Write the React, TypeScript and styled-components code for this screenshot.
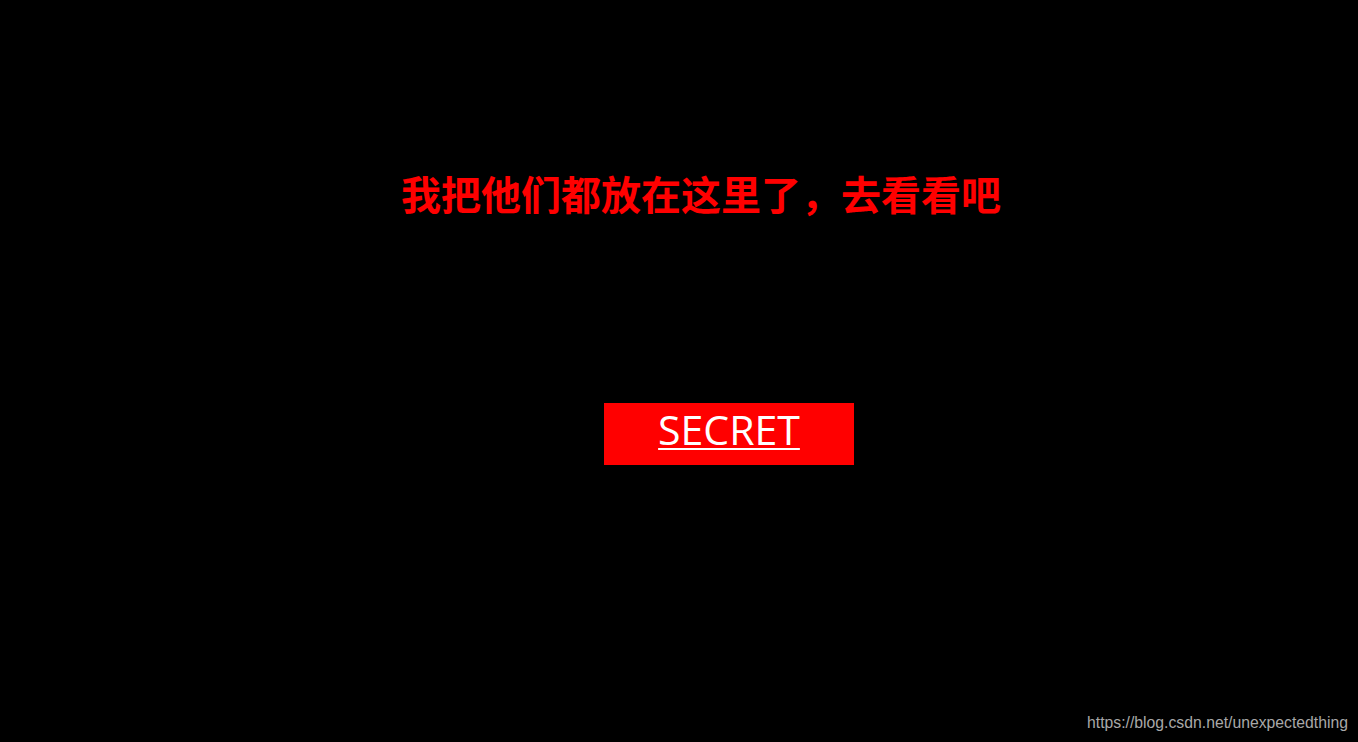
import React from "react";
import styled, { createGlobalStyle } from "styled-components";

const Global = createGlobalStyle`
  html, body { margin: 0; padding: 0; background: #000; }
  #root { height: 742px; }
`;

const Page = styled.div`
  height: 742px;
  background: #000;
  display: flex;
  flex-direction: column;
  align-items: flex-start;
  box-sizing: border-box;
  padding-top: 166px;
`;

const Heading = styled.h1`
  margin: 0 0 0 401px;
  font-family: "Noto Sans CJK SC", "Noto Sans", sans-serif;
  font-weight: 700;
  font-size: 40px;
  line-height: 54px;
  color: #ff0000;
  letter-spacing: 0;
`;

const SecretLink = styled.a`
  margin: 183px 0 0 604px;
  width: 250px;
  height: 62px;
  background: #ff0000;
  color: #fff;
  display: flex;
  align-items: center;
  justify-content: center;
  font-family: "Open Sans", "Noto Sans", sans-serif;
  font-size: 41px;
  text-decoration: underline;
  text-decoration-thickness: 2px;
  text-underline-offset: 3px;
  box-sizing: border-box;
  padding-bottom: 10px;
`;

const Watermark = styled.div`
  margin-top: auto;
  align-self: flex-end;
  margin-right: 10px;
  margin-bottom: 10px;
  font-family: "Liberation Sans", Arial, sans-serif;
  font-size: 15.75px;
  color: #a8a8a8;
`;

export default function App() {
  return (
    <>
      <Global />
      <Page>
        <Heading>我把他们都放在这里了，去看看吧</Heading>
        <SecretLink href="#">SECRET</SecretLink>
        <Watermark>https://blog.csdn.net/unexpectedthing</Watermark>
      </Page>
    </>
  );
}
